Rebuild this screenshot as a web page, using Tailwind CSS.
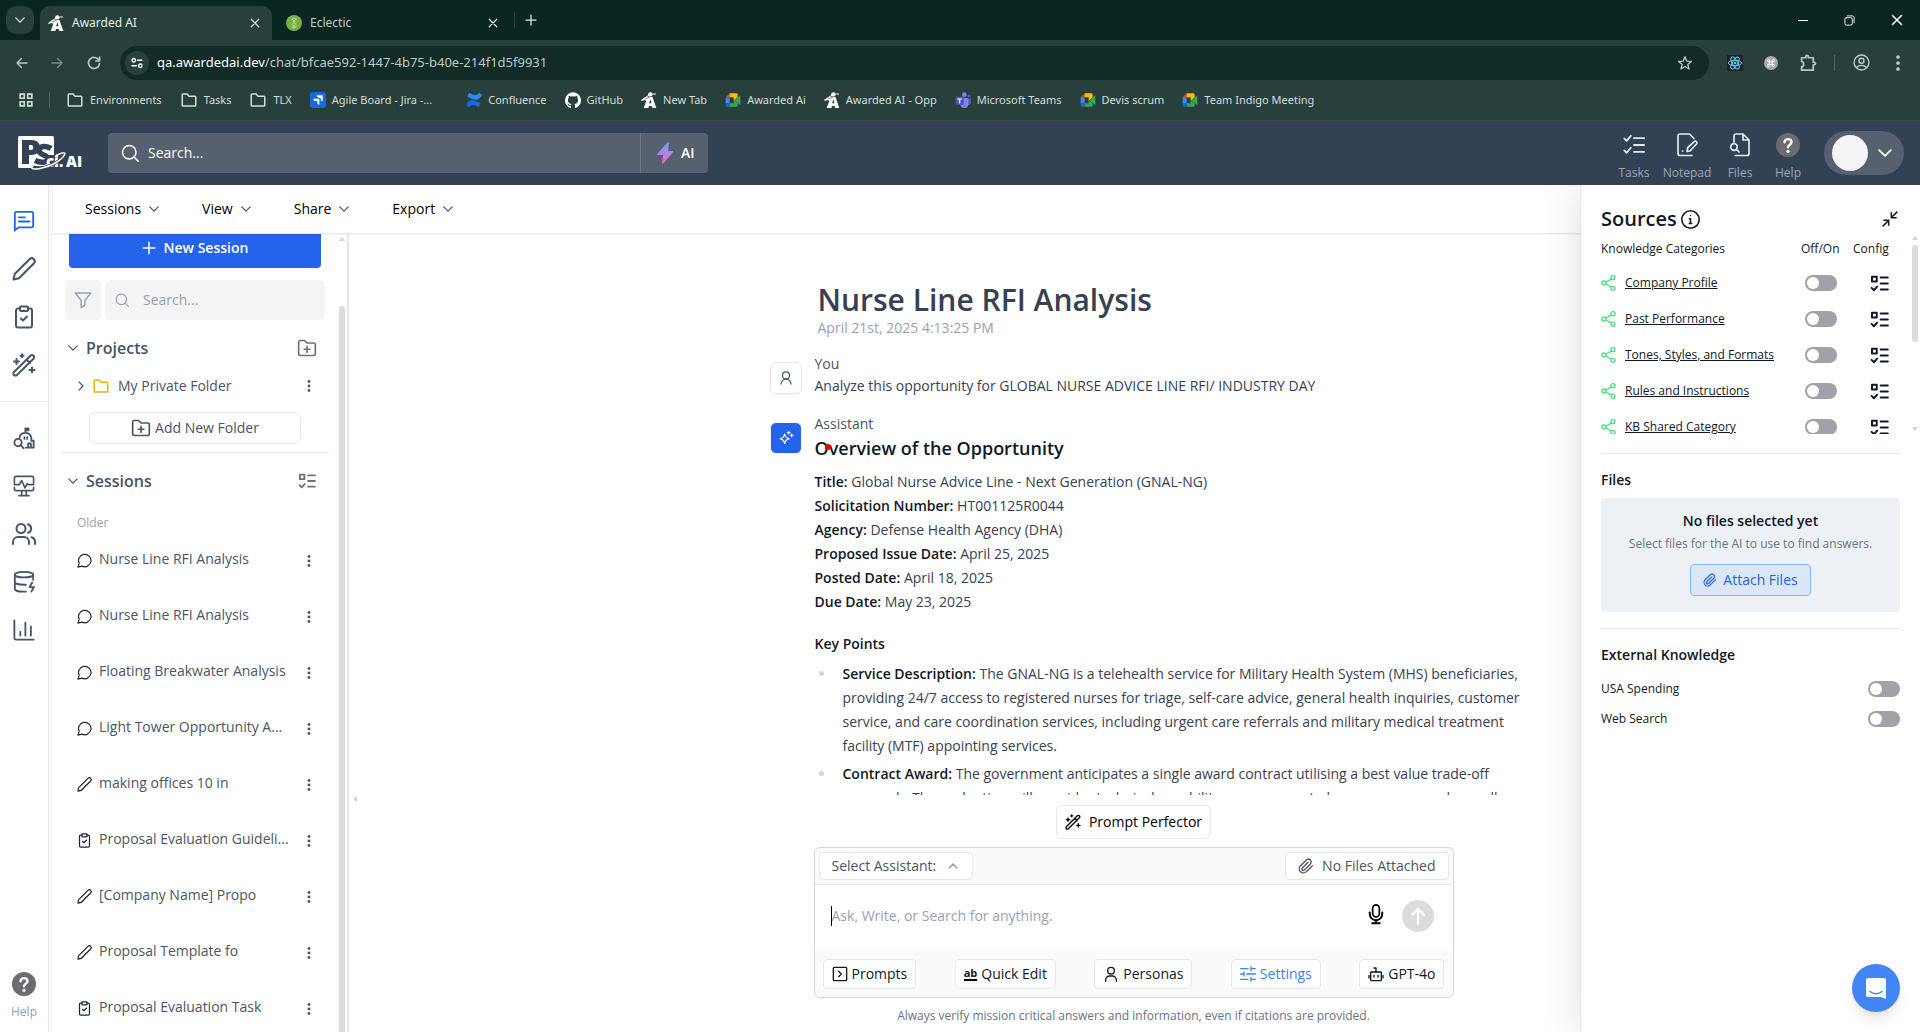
<!DOCTYPE html>
<html lang="en">
<head>
<meta charset="utf-8">
<title>Awarded AI</title>
<script src="https://cdn.jsdelivr.net/npm/@tailwindcss/browser@4"></script>
</head>
<body class="flex h-screen flex-col overflow-hidden bg-white fill-none stroke-current stroke-2 font-['Open_Sans','Noto_Sans',sans-serif] text-sm text-[#374151] [stroke-linecap:round] [stroke-linejoin:round]">

<svg class="hidden" aria-hidden="true">
  <!-- Line icons: fill and stroke are inherited from the page -->
  <symbol id="chev-down" viewBox="0 0 24 24"><path stroke-width="3" d="M2 7l10 10L22 7"/></symbol>
  <symbol id="chev-up" viewBox="0 0 24 24"><path stroke-width="3.500" d="M3 17l9-10 9 10"/></symbol>
  <symbol id="chev-right" viewBox="0 0 24 24"><path stroke-width="3" d="M7 2l10 10L7 22"/></symbol>
  <symbol id="x" viewBox="0 0 24 24"><path stroke-width="3" d="M3 3l18 18M21 3L3 21"/></symbol>
  <symbol id="plus" viewBox="0 0 24 24"><path stroke-width="2.500" d="M12 2v20M2 12h20"/></symbol>
  <symbol id="search" viewBox="0 0 24 24"><circle cx="11" cy="11" r="9"/><path d="M17.500 17.500L23 23"/></symbol>
  <symbol id="folder" viewBox="0 0 24 24"><path d="M3 19V5a1 1 0 0 1 1-1h5.500l2.500 3H20a1 1 0 0 1 1 1v11a1 1 0 0 1-1 1H4a1 1 0 0 1-1-1z"/></symbol>
  <symbol id="folder-plus" viewBox="0 0 24 24"><path d="M2 19V5a2 2 0 0 1 2-2h5l3 3h8a2 2 0 0 1 2 2v11a2 2 0 0 1-2 2H4a2 2 0 0 1-2-2zM12 10v7M8.500 13.500h7"/></symbol>
  <symbol id="pencil" viewBox="0 0 24 24"><path d="M1.500 22.500l1.200-5.500L17.500 2.200a2.900 2.900 0 0 1 4.300 4.300L7 21.300z"/></symbol>
  <symbol id="clipboard" viewBox="0 0 24 24"><path d="M8 3.500H6a2 2 0 0 0-2 2v15a2 2 0 0 0 2 2h12a2 2 0 0 0 2-2v-15a2 2 0 0 0-2-2h-2"/><rect x="8" y="1.500" width="8" height="4.500" rx="1"/><path d="M9 13.500l2 2 4-4"/></symbol>
  <symbol id="wand" viewBox="0 0 24 24"><path d="M2 19L18.500 2.700a2.200 2.200 0 0 1 3 0 2.200 2.200 0 0 1 0 3L5 22a2.100 2.100 0 0 1-3-3zM14.500 6.500l3.500 3.500M4.500 6v5M2 8.500h5M10 1.200v3M8.500 2.700h3M20 14.500v5M17.500 17h5"/></symbol>
  <symbol id="chat-lines" viewBox="0 0 24 24"><path stroke-linejoin="miter" d="M2 22V4a2 2 0 0 1 2-2h16a2 2 0 0 1 2 2v13a2 2 0 0 1-2 2H6z"/><path d="M6.500 8H13M6.500 12.500H18"/></symbol>
  <symbol id="bubble" viewBox="0 0 24 24"><path d="M7.900 21A10 10 0 1 0 3.500 16.600L1.500 22.500z"/></symbol>
  <symbol id="funnel" viewBox="0 0 24 24"><path d="M1.500 2.500h21l-8 10V19L9.500 22v-9.500z"/></symbol>
  <symbol id="todo" viewBox="0 0 24 24"><path stroke-width="2.500" d="M2.500 3.500h6v6h-6zM13.500 4.500h9M13.500 12h9M13.500 19.500h9M2 17.500l3 3 4-4.500"/></symbol>
  <symbol id="list-checks" viewBox="0 0 24 24"><path d="M1.500 5l2.500 2.500L8.500 2M1.500 18l2.500 2.500L8.500 15M12 4.500h11M12 12h11M12 19.500h11"/></symbol>
  <symbol id="building" viewBox="0 0 24 24"><path d="M13.500 1.500v4.500M13.500 1.500H17v2h-3.500M7 11.500a6.700 6.700 0 0 1 13 0V15M12.500 11v2M15.500 11v2M20 15h2.500v7.500H14M16.500 22v-4h3v4"/><circle cx="5.500" cy="17" r="4"/><path d="M8.500 20l3 3"/></symbol>
  <symbol id="monitor" viewBox="0 0 24 24"><path stroke-width="1.800" d="M1.500 9V3.500a2 2 0 0 1 2-2h17a2 2 0 0 1 2 2V9M1.500 13.500v1.500a2 2 0 0 0 2 2h17a2 2 0 0 0 2-2v-1.500M1.500 10.500H7L9.500 6l3.500 8 2.500-4.500 1 1h6M9.500 17v5M14.500 17v5M6.500 22.500h11"/></symbol>
  <symbol id="users" viewBox="0 0 24 24"><circle cx="9" cy="6.500" r="4.500"/><path d="M1 22v-2a5 5 0 0 1 5-5h6a5 5 0 0 1 5 5v2M16 2.200a4.500 4.500 0 0 1 0 8.600M23 22v-2a5 5 0 0 0-3.500-4.800"/></symbol>
  <symbol id="database" viewBox="0 0 24 24"><ellipse cx="12" cy="4" rx="10" ry="3"/><path d="M2 4v15.500c0 1.700 4 3 9 3h3M22 4v5.500M2 12c0 1.700 4.500 3 10 3h2M21 12.500l-3 5h5l-3 5"/></symbol>
  <symbol id="chart" viewBox="0 0 24 24"><path d="M1.500 1.500v19a2 2 0 0 0 2 2h19M8 14v4M13.500 4v14M19.500 8v10"/></symbol>
  <symbol id="notepad" viewBox="0 0 24 24"><path stroke-width="1.700" d="M17 22.500H5a2 2 0 0 1-2-2V3a2 2 0 0 1 2-2h9.500L19 5.500M7.500 18h.2M12 18.500l.8-4L19 8.800a1.600 1.600 0 0 1 2.500 2.200L15 18z"/></symbol>
  <symbol id="file-search" viewBox="0 0 24 24"><path stroke-width="1.700" d="M6 9V3a2 2 0 0 1 2-2h7l6 6v13.500a2 2 0 0 1-2 2H7M15 1v6h6"/><circle stroke-width="1.700" cx="6" cy="14" r="3.300"/><path stroke-width="1.700" d="M8.500 16.500l2.500 2.500"/></symbol>
  <symbol id="person" viewBox="0 0 24 24"><circle cx="12" cy="7.500" r="6"/><path d="M3.500 22.500a8.500 8.500 0 0 1 17 0"/></symbol>
  <symbol id="persona" viewBox="0 0 24 24"><circle cx="12" cy="7" r="5"/><path d="M4 23v-2a6 6 0 0 1 6-6h4a6 6 0 0 1 6 6v2"/></symbol>
  <symbol id="sparkle" viewBox="0 0 24 24"><path stroke-width="1.700" d="M10 6c.8 4.800 2.200 6.200 7 7-4.800 1-6.200 2.500-7 7.500-.8-5-2.200-6.500-7-7.500 4.800-.8 6.200-2.200 7-7zM16 2v4M14 4h4M20.500 6v4M18.500 8h4"/></symbol>
  <symbol id="clip" viewBox="0 0 24 24"><path d="M21.500 11.500l-9 9a6 6 0 0 1-9-8.500l9-9a4.200 4.200 0 0 1 6 6l-9 9a2 2 0 0 1-3-3l8.500-8.500"/></symbol>
  <symbol id="mic" viewBox="0 0 24 24"><rect x="8" y="1" width="8" height="14.500" rx="4"/><path stroke-width="2.300" d="M4.500 10v2a7.500 7.500 0 0 0 15 0v-2M12 19.500V23M7.500 23h9"/></symbol>
  <symbol id="arrow-up" viewBox="0 0 24 24"><path stroke-width="2.800" d="M12 21V4M5 10.500L12 3.500l7 7"/></symbol>
  <symbol id="prompt" viewBox="0 0 24 24"><rect x="2" y="2" width="20" height="20" rx="1.500"/><path d="M10 8l4 4-4 4"/></symbol>
  <symbol id="sliders" viewBox="0 0 24 24"><path d="M1 4h11M17 4h6M16.500 1v6M1 12h4M10 12h13M6 9v6M1 20h11M17 20h6M16.500 17v6"/></symbol>
  <symbol id="bot" viewBox="0 0 24 24"><rect x="4" y="9" width="16" height="13" rx="1"/><path d="M12 9V3H9M1.500 14v4M22.500 14v4M9 14v2.500M15 14v2.500"/></symbol>
  <symbol id="share" viewBox="0 0 24 24"><circle cx="4.500" cy="12" r="3"/><circle cx="18" cy="4" r="3"/><circle cx="18" cy="20" r="3"/><path d="M7.500 10.500L15.500 6M7.500 13.500l8 4.500"/></symbol>
  <symbol id="info" viewBox="0 0 24 24"><circle cx="12" cy="12" r="11"/><path d="M12 11v6M12 7h.01M10.500 11H12M10.500 17h3"/></symbol>
  <symbol id="shrink" viewBox="0 0 24 24"><path stroke-width="2.300" stroke-linecap="butt" stroke-linejoin="miter" d="M23 1l-8 8M14 2v8h8M1 23l8-8M2 14h8v8"/></symbol>
  <symbol id="star" viewBox="0 0 24 24"><path d="M12 2.500l2.600 6.600 7 .5-5.400 4.500 1.800 6.900-6-3.800L6 21l1.800-6.900-5.400-4.500 7-.5z"/></symbol>
  <symbol id="puzzle" viewBox="0 0 24 24"><path stroke-width="2.300" d="M3.500 5H9V3.500a1.700 1.700 0 0 1 3.400 0V5H19v6h1.200a1.700 1.700 0 0 1 0 3.400H19V21.500H3.500V17c3.500 0 3.500-7 0-7z"/></symbol>
  <symbol id="account" viewBox="0 0 24 24"><circle cx="12" cy="12" r="10.500"/><circle cx="12" cy="9.500" r="3.500"/><path d="M5 19c3-4 11-4 14 0"/></symbol>
  <symbol id="back" viewBox="0 0 24 24"><path stroke-width="2.800" d="M22 12H2M11 3l-9 9 9 9"/></symbol>
  <symbol id="forward" viewBox="0 0 24 24"><path stroke-width="2.800" d="M2 12h20M13 3l9 9-9 9"/></symbol>
  <symbol id="reload" viewBox="0 0 24 24"><path stroke-width="2.800" d="M20.500 7.500A9.500 9.500 0 1 0 21.500 13M21.500 2v6.500H15"/></symbol>
  <symbol id="tune" viewBox="0 0 24 24"><circle stroke-width="2.600" cx="5.500" cy="6.500" r="3.500"/><path stroke-width="2.600" d="M13 6.500h9M2 17.500h9"/><circle stroke-width="2.600" cx="18.500" cy="17.500" r="3.500"/></symbol>
  <symbol id="apps" viewBox="0 0 24 24"><path stroke-width="2.800" stroke-linejoin="miter" d="M2 2h7v7H2zM15 2h7v7h-7zM2 15h7v7H2zM15 15h7v7h-7z"/></symbol>
  <symbol id="restore" viewBox="0 0 24 24"><rect x="2" y="6" width="16" height="16" rx="3"/><path d="M7 2h11a4 4 0 0 1 4 4v11"/></symbol>
  <!-- Solid and coloured icons -->
  <symbol id="react" viewBox="0 0 24 24" stroke="none"><rect width="24" height="24" fill="#20232a"/><g stroke="#5ccfee" stroke-width="1.500"><ellipse cx="12" cy="12" rx="10" ry="4"/><ellipse cx="12" cy="12" rx="10" ry="4" transform="rotate(60 12 12)"/><ellipse cx="12" cy="12" rx="10" ry="4" transform="rotate(120 12 12)"/></g><circle cx="12" cy="12" r="2" fill="#5ccfee"/></symbol>
  <symbol id="cmd" viewBox="0 0 24 24" stroke="none"><circle cx="12" cy="12" r="10.500" fill="#a8a8a8"/><path stroke="#fff" stroke-width="1.500" d="M10 10h4v4h-4zM10 10H8.500A1.700 1.700 0 1 1 10 8.300zM14 10V8.300A1.700 1.700 0 1 1 15.500 10zM14 14h1.500a1.700 1.700 0 1 1-1.500 1.700zM10 14v1.700A1.700 1.700 0 1 1 8.500 14z"/></symbol>
  <symbol id="dots" viewBox="0 0 24 24" stroke="none"><g fill="currentColor"><circle cx="12" cy="3" r="2.800"/><circle cx="12" cy="12" r="2.800"/><circle cx="12" cy="21" r="2.800"/></g></symbol>
  <symbol id="help" viewBox="0 0 24 24" stroke="none"><circle cx="12" cy="12" r="12" fill="#6b6b70"/><path d="M8.500 9.300c0-4.300 7-4.300 7 0 0 2.500-3.500 2.500-3.500 5" stroke="#fff" stroke-width="2.400"/><circle cx="12" cy="18.300" r="1.600" fill="#fff"/></symbol>
  <symbol id="award" viewBox="0 0 24 24" stroke="none"><path fill="#fff" fill-rule="evenodd" d="M10 7h7l6 17h-6l-1-3h-4l-1 3H4l4-11-3-1-5 2 6-6zM14 11l-1.800 6h3.600z"/><circle cx="14" cy="3.800" r="3.300" fill="#fff"/><path d="M1 12C7 9 12 2 22 3" stroke="#fff" stroke-width="1.500"/><path d="M7 10c5-1 8-4 11-4" stroke="#28403b" stroke-width="1"/></symbol>
  <symbol id="meet" viewBox="0 0 24 24" stroke="none"><path fill="#ea4335" d="M1 8l6-6v6z"/><path fill="#4285f4" d="M1 8h6v9H1z"/><path fill="#1967d2" d="M1 17h6v5H3a2 2 0 0 1-2-2z"/><path fill="#34a853" d="M7 17h6v-5l6 5v3a2 2 0 0 1-2 2H7z"/><path fill="#fbbc04" d="M7 2h10a2 2 0 0 1 2 2v4l-6 5V8H7z"/><path fill="#34a853" d="M14 12.500L23 5v15z"/></symbol>
  <symbol id="teams" viewBox="0 0 24 24" stroke="none"><circle cx="14" cy="4" r="3.500" fill="#7b83eb"/><circle cx="21" cy="6" r="2.300" fill="#5059c9"/><path fill="#5059c9" d="M17 10h7v6a4 4 0 0 1-6 3z"/><path fill="#7b83eb" d="M8 9h12v9a6 6 0 0 1-12 0z"/><rect x="1" y="7" width="12" height="12" rx="1" fill="#4b53bc"/><path stroke="#fff" stroke-width="1.800" d="M4 10.500h6M7 10.500v6"/></symbol>
  <symbol id="jira" viewBox="0 0 24 24" stroke="none"><rect width="24" height="24" rx="4" fill="#1868db"/><path fill="#fff" d="M10 5h9v9c-2 0-3-1.500-3-3.500V8.500h-2.500C11.500 8.500 10 7 10 5zM5 10h9v9c-2 0-3-1.500-3-3.500v-2H8.500C6.500 13.500 5 12 5 10z"/></symbol>
  <symbol id="confluence" viewBox="0 0 24 24" stroke="none"><path fill="#1868db" d="M1 18c5-8 9-7 21-1l-2.500 6C11 19 8 18 4.500 23L0 20z"/><path fill="#2f87ff" d="M23 6c-5 8-9 7-21 1l2.500-6C13 5 16 6 19.500 1L24 4z"/></symbol>
  <symbol id="github" viewBox="0 0 24 24" stroke="none"><path fill="#fff" d="M12 .5A12 12 0 0 0 8.200 23.900c.6.100.8-.3.800-.6v-2.200c-3.300.7-4-1.400-4-1.400-.6-1.400-1.400-1.800-1.400-1.800-1-.7.100-.7.100-.7 1.200.1 1.900 1.200 1.900 1.200 1 1.800 2.800 1.300 3.500 1 .1-.8.400-1.300.7-1.600-2.600-.3-5.400-1.300-5.400-5.900 0-1.300.5-2.400 1.200-3.200-.1-.3-.5-1.500.1-3.200 0 0 1-.3 3.300 1.200a11.500 11.500 0 0 1 6 0c2.300-1.500 3.300-1.200 3.300-1.200.6 1.700.2 2.900.1 3.200.8.800 1.200 1.900 1.200 3.200 0 4.600-2.800 5.600-5.500 5.900.5.400.9 1.100.9 2.200v3.300c0 .3.200.7.800.6A12 12 0 0 0 12 .5z"/></symbol>
  <symbol id="eclectic" viewBox="0 0 24 24" stroke="none"><circle cx="12" cy="12" r="12" fill="#78b041"/><path stroke="#cbe3ad" stroke-width="1.300" d="M9 6l4 4-4 4 4 4M15 6l-4 4 4 4-4 4M9 6c3-2 3-2 6 0M9 18c3 2 3 2 6 0"/></symbol>
</svg>

<!-- Browser tab strip -->
<div class="flex h-10 shrink-0 items-end bg-[#0a2622] font-['Noto_Sans','Open_Sans',sans-serif] text-xs text-[#dfe9e6]">
  <button aria-label="Search tabs" class="mb-1.5 ml-1.5 flex size-7 items-center justify-center rounded-[10px] bg-[#28403b]"><svg class="size-2.5"><use href="#chev-down"/></svg></button>
  <div class="ml-1.5 flex h-[34px] w-[232px] items-center rounded-t-[10px] bg-[#28403b] px-2">
    <svg class="size-4"><use href="#award"/></svg><span class="ml-2 flex-1 text-[#e6efec]">Awarded AI</span>
    <button aria-label="Close tab" class="mr-1"><svg class="size-2.5"><use href="#x"/></svg></button>
  </div>
  <div class="flex h-[34px] w-[242px] items-center pr-2 pl-3.5">
    <svg class="size-4"><use href="#eclectic"/></svg><span class="ml-2 flex-1 text-[#b9cdc8]">Eclectic</span>
    <button aria-label="Close tab" class="mr-2"><svg class="size-2.5"><use href="#x"/></svg></button>
  </div>
  <div class="mb-3 h-4 w-px bg-[#28403b]"></div>
  <button aria-label="New tab" class="mb-3.5 ml-2.5"><svg class="size-3"><use href="#plus"/></svg></button>
  <div class="flex flex-1 items-center justify-end gap-9 self-center pr-[17px] text-white">
    <button aria-label="Minimize" class="h-px w-2.5 bg-white"></button>
    <button aria-label="Restore"><svg class="size-[11px]"><use href="#restore"/></svg></button>
    <button aria-label="Close"><svg class="size-3"><use href="#x"/></svg></button>
  </div>
</div>

<!-- Address bar -->
<div class="flex h-[45px] shrink-0 items-center bg-[#28403b] pr-3.5 pl-4 text-[#b5ccc6]">
  <button aria-label="Back"><svg class="size-3"><use href="#back"/></svg></button>
  <button aria-label="Forward" class="ml-[23px] text-[#6f8f87]"><svg class="size-3"><use href="#forward"/></svg></button>
  <button aria-label="Reload" class="ml-6"><svg class="size-3.5"><use href="#reload"/></svg></button>
  <div class="ml-[19px] flex h-[34px] flex-1 items-center rounded-full bg-[#112b27] pr-4 pl-[5px] font-['Noto_Sans','Open_Sans',sans-serif]">
    <span class="flex size-6 items-center justify-center rounded-full bg-[#28403b] text-white"><svg class="size-3"><use href="#tune"/></svg></span>
    <span class="ml-2 flex-1 text-[13px] text-[#b9cac6]"><span class="text-white">qa.awardedai.dev</span>/chat/bfcae592-1447-4b75-b40e-214f1d5f9931</span>
    <button aria-label="Bookmark"><svg class="size-4"><use href="#star"/></svg></button>
  </div>
  <svg class="ml-[18px] size-4"><use href="#react"/></svg>
  <svg class="ml-5 size-4"><use href="#cmd"/></svg>
  <button aria-label="Extensions" class="ml-5"><svg class="size-[18px]"><use href="#puzzle"/></svg></button>
  <div class="ml-[17px] h-4 w-px bg-[#4a625c]"></div>
  <button aria-label="Profile" class="ml-[18px]"><svg class="size-[17px]"><use href="#account"/></svg></button>
  <button aria-label="Menu" class="ml-5"><svg class="size-4"><use href="#dots"/></svg></button>
</div>

<!-- Bookmarks -->
<nav class="flex h-9 shrink-0 items-center gap-[18px] border-b border-[#45484a] bg-[#28403b] pb-1.5 pl-[19px] font-['Noto_Sans','Open_Sans',sans-serif] text-[11px] text-[#d3dedb]">
  <svg class="size-3.5"><use href="#apps"/></svg>
  <div class="-mx-0.5 h-4 w-px bg-[#4a625c]"></div>
  <a href="#" class="flex items-center gap-1.5"><svg class="size-[18px]"><use href="#folder"/></svg>Environments</a>
  <a href="#" class="flex items-center gap-1.5"><svg class="size-[18px]"><use href="#folder"/></svg>Tasks</a>
  <a href="#" class="flex items-center gap-1.5"><svg class="size-[18px]"><use href="#folder"/></svg>TLX</a>
  <a href="#" class="flex items-center gap-1.5"><svg class="size-4"><use href="#jira"/></svg>Agile Board - Jira -...</a>
  <a href="#" class="ml-4 flex items-center gap-1.5"><svg class="size-4"><use href="#confluence"/></svg>Confluence</a>
  <a href="#" class="flex items-center gap-1.5"><svg class="size-4"><use href="#github"/></svg>GitHub</a>
  <a href="#" class="flex items-center gap-1.5"><svg class="size-4"><use href="#award"/></svg>New Tab</a>
  <a href="#" class="flex items-center gap-1.5"><svg class="size-4"><use href="#meet"/></svg>Awarded Ai</a>
  <a href="#" class="flex items-center gap-1.5"><svg class="size-4"><use href="#award"/></svg>Awarded AI - Opp</a>
  <a href="#" class="flex items-center gap-1.5"><svg class="size-4"><use href="#teams"/></svg>Microsoft Teams</a>
  <a href="#" class="flex items-center gap-1.5"><svg class="size-4"><use href="#meet"/></svg>Devis scrum</a>
  <a href="#" class="flex items-center gap-1.5"><svg class="size-4"><use href="#meet"/></svg>Team Indigo Meeting</a>
</nav>

<!-- Application header -->
<header class="flex h-16 shrink-0 items-center bg-[#334155] pr-4 pl-[18px] text-white">
  <svg class="h-[34px] w-[66px] stroke-none" viewBox="0 0 66 34" role="img" aria-label="PSci.AI">
    <rect width="36" height="32" rx="1.500" fill="#fff"/>
    <path fill="#334155" fill-rule="evenodd" d="M4 4h9c9 0 10 6 8 11-2 3-5 4-8 4h-2v9H4zm7 5v5h2c3 0 3-5 0-5z"/>
    <path stroke="#334155" stroke-width="5.500" stroke-linecap="butt" d="M33 12.500c-4-3-12-3-12 2 0 5 9 4 9 8.500 0 4-8 4-13 1.500"/>
    <path fill="#334155" d="M30 19h7v13H24c4 0 6-4 6-7z"/>
    <text x="28" y="31" fill="#fff" font-size="15" font-weight="800">ci.</text>
    <text x="48" y="31" fill="#fff" font-size="15" font-weight="800">AI</text>
    <path stroke="#334155" stroke-width="3" d="M15 31c10 3 26-3 32-13"/>
    <path stroke="#fff" stroke-width="1.500" d="M15 30c-4 3 3 4 9 2 10-2 20-8 23-14 0-2-4-1-8 1"/>
  </svg>
  <div class="ml-6 flex h-10 w-[600px] items-center rounded bg-[#57606e]">
    <label for="q" class="ml-[13px]"><svg class="size-[18px]" aria-label="Search"><use href="#search"/></svg></label>
    <input id="q" type="text" placeholder="Search..." class="ml-[9px] flex-1 bg-transparent text-sm outline-none placeholder:text-white">
    <button class="flex h-10 w-[68px] items-center gap-2 border-l border-[#6e7683] pl-4 font-semibold"><svg class="h-6 w-4 stroke-none" viewBox="0 0 16 24"><defs><linearGradient id="bolt" x1="0" y1="0" x2="0" y2="1"><stop offset="0" stop-color="#5fa8f8"/><stop offset=".5" stop-color="#b084e8"/><stop offset="1" stop-color="#f062c0"/></linearGradient></defs><path fill="url(#bolt)" d="M11 1L.5 12.500v1.500H6L5 22.500l1 .5 10-12V10h-5l1-8.500z"/></svg>AI</button>
  </div>
  <nav class="ml-auto flex pt-2 text-xs text-[#9ca6b4] [&_svg]:text-[#e2e8f0]">
    <a href="#" class="flex w-[50px] flex-col items-center gap-2"><svg class="size-6 p-px"><use href="#list-checks"/></svg><span>Tasks</span></a>
    <a href="#" class="flex w-14 flex-col items-center gap-2"><svg class="size-6"><use href="#notepad"/></svg><span>Notepad</span></a>
    <a href="#" class="flex w-[50px] flex-col items-center gap-2"><svg class="size-6"><use href="#file-search"/></svg><span>Files</span></a>
    <a href="#" class="flex w-[46px] flex-col items-center gap-2"><svg class="size-6"><use href="#help"/></svg><span>Help</span></a>
  </nav>
  <button aria-label="Account" class="ml-[13px] flex h-11 w-20 items-center gap-2.5 rounded-full bg-[#57606e] pl-2"><span class="size-9 rounded-full bg-gray-100"></span><svg class="size-3.5"><use href="#chev-down"/></svg></button>
</header>

<div class="flex min-h-0 flex-1">
  <!-- Icon rail -->
  <nav class="flex w-[49px] shrink-0 flex-col items-center border-r border-gray-200 pt-6 text-[#475569]">
    <div class="flex flex-col gap-6">
      <a href="#" aria-label="Chat" class="text-[#2563eb]"><svg class="size-6 p-px"><use href="#chat-lines"/></svg></a>
      <a href="#" aria-label="Write"><svg class="size-6"><use href="#pencil"/></svg></a>
      <a href="#" aria-label="Tasks"><svg class="size-6"><use href="#clipboard"/></svg></a>
      <a href="#" aria-label="Prompts"><svg class="size-6"><use href="#wand"/></svg></a>
    </div>
    <div class="my-6 h-px w-full bg-gray-200"></div>
    <div class="flex flex-col gap-6">
      <a href="#" aria-label="Opportunities"><svg class="size-6 p-px"><use href="#building"/></svg></a>
      <a href="#" aria-label="Monitor"><svg class="size-6 p-px"><use href="#monitor"/></svg></a>
      <a href="#" aria-label="People"><svg class="size-6"><use href="#users"/></svg></a>
      <a href="#" aria-label="Data"><svg class="size-6 p-px"><use href="#database"/></svg></a>
      <a href="#" aria-label="Reports"><svg class="size-6 p-px"><use href="#chart"/></svg></a>
    </div>
    <a href="#" class="mt-auto mb-3 flex flex-col items-center gap-2 text-xs text-slate-400"><svg class="size-6"><use href="#help"/></svg>Help</a>
  </nav>
  <div class="w-1 shrink-0 bg-[#f8f8f8]"></div>

  <div class="relative flex min-w-0 flex-1 flex-col">
    <!-- Menu bar -->
    <div class="z-10 flex h-[49px] shrink-0 items-center gap-[43px] border-b border-gray-200 bg-white pl-8 text-black shadow-xs">
      <button class="flex items-center gap-2">Sessions<svg class="size-2.5 text-[#4b5563]"><use href="#chev-down"/></svg></button>
      <button class="flex items-center gap-2">View<svg class="size-2.5 text-[#4b5563]"><use href="#chev-down"/></svg></button>
      <button class="flex items-center gap-2">Share<svg class="size-2.5 text-[#4b5563]"><use href="#chev-down"/></svg></button>
      <button class="flex items-center gap-2">Export<svg class="size-2.5 text-[#4b5563]"><use href="#chev-down"/></svg></button>
    </div>

    <div class="flex min-h-0 flex-1">
      <!-- Session list -->
      <aside class="flex w-[296px] shrink-0 border-r-2 border-gray-200">
        <div class="flex min-w-0 flex-1 flex-col overflow-hidden pr-2.5 pl-2">
          <button class="mx-2 flex h-[34px] shrink-0 items-center justify-center gap-2 rounded-b bg-[#2563eb] pb-1.5 font-semibold text-white"><svg class="size-3.5"><use href="#plus"/></svg>New Session</button>
          <div class="mt-3 flex h-10 shrink-0 gap-1 px-1">
            <button aria-label="Filter" class="flex w-9 items-center justify-center rounded-sm bg-gray-100 text-gray-400"><svg class="size-[18px]"><use href="#funnel"/></svg></button>
            <label class="flex flex-1 items-center rounded-md bg-gray-100 text-gray-400"><svg class="ml-2.5 size-3.5"><use href="#search"/></svg><input type="text" aria-label="Search sessions" placeholder="Search..." class="ml-3.5 w-36 bg-transparent outline-none placeholder:text-gray-400"></label>
          </div>
          <div class="mt-4 flex items-center pr-3 pl-[7px] text-[#475569]">
            <svg class="size-2.5"><use href="#chev-down"/></svg><h2 class="ml-2 flex-1 text-base font-semibold">Projects</h2><button aria-label="New project"><svg class="size-5 text-[#6b7280]"><use href="#folder-plus"/></svg></button>
          </div>
          <div class="mt-4 flex items-center pr-3.5 pl-[15px] text-[#475569]">
            <svg class="size-2.5"><use href="#chev-right"/></svg><svg class="ml-1.5 size-[18px] text-[#eab308]"><use href="#folder"/></svg><span class="ml-2 flex-1 text-[#4b5563]">My Private Folder</span><button aria-label="Folder menu"><svg class="size-3"><use href="#dots"/></svg></button>
          </div>
          <button class="mx-7 mt-4 flex h-8 shrink-0 items-center justify-center gap-1 rounded-md border border-gray-200 text-[#4b5563]"><svg class="size-5"><use href="#folder-plus"/></svg>Add New Folder</button>
          <div class="mt-2 h-px shrink-0 bg-gray-200"></div>
          <div class="mt-4 flex items-center pr-3 pl-[7px] text-[#475569]">
            <svg class="size-2.5"><use href="#chev-down"/></svg><h2 class="ml-2 flex-1 text-base font-semibold">Sessions</h2><button aria-label="Select sessions"><svg class="mr-px size-[18px] text-[#6b7280]"><use href="#todo"/></svg></button>
          </div>
          <p class="mt-[22px] pl-4 text-xs text-gray-400">Older</p>
          <ul class="mt-0.5 text-[#4b5563]">
            <li class="flex h-14 items-center pr-3.5 pl-4"><svg class="mb-0.5 size-[15px] text-[#1e293b]"><use href="#bubble"/></svg><span class="mb-1 ml-[7px] flex-1 truncate">Nurse Line RFI Analysis</span><button aria-label="Session menu" class="ml-2"><svg class="size-3"><use href="#dots"/></svg></button></li>
            <li class="flex h-14 items-center pr-3.5 pl-4"><svg class="mb-0.5 size-[15px] text-[#1e293b]"><use href="#bubble"/></svg><span class="mb-1 ml-[7px] flex-1 truncate">Nurse Line RFI Analysis</span><button aria-label="Session menu" class="ml-2"><svg class="size-3"><use href="#dots"/></svg></button></li>
            <li class="flex h-14 items-center pr-3.5 pl-4"><svg class="mb-0.5 size-[15px] text-[#1e293b]"><use href="#bubble"/></svg><span class="mb-1 ml-[7px] flex-1 truncate">Floating Breakwater Analysis</span><button aria-label="Session menu" class="ml-2"><svg class="size-3"><use href="#dots"/></svg></button></li>
            <li class="flex h-14 items-center pr-3.5 pl-4"><svg class="mb-0.5 size-[15px] text-[#1e293b]"><use href="#bubble"/></svg><span class="mb-1 ml-[7px] flex-1 truncate">Light Tower Opportunity A...</span><button aria-label="Session menu" class="ml-2"><svg class="size-3"><use href="#dots"/></svg></button></li>
            <li class="flex h-14 items-center pr-3.5 pl-4"><svg class="mb-0.5 size-[15px] text-[#1e293b]"><use href="#pencil"/></svg><span class="mb-1 ml-[7px] flex-1 truncate">making offices 10 in</span><button aria-label="Session menu" class="ml-2"><svg class="size-3"><use href="#dots"/></svg></button></li>
            <li class="flex h-14 items-center pr-3.5 pl-4"><svg class="mb-0.5 size-[15px] text-[#1e293b]"><use href="#clipboard"/></svg><span class="mb-1 ml-[7px] flex-1 truncate">Proposal Evaluation Guideli...</span><button aria-label="Session menu" class="ml-2"><svg class="size-3"><use href="#dots"/></svg></button></li>
            <li class="flex h-14 items-center pr-3.5 pl-4"><svg class="mb-0.5 size-[15px] text-[#1e293b]"><use href="#pencil"/></svg><span class="mb-1 ml-[7px] flex-1 truncate">[Company Name] Propo</span><button aria-label="Session menu" class="ml-2"><svg class="size-3"><use href="#dots"/></svg></button></li>
            <li class="flex h-14 items-center pr-3.5 pl-4"><svg class="mb-0.5 size-[15px] text-[#1e293b]"><use href="#pencil"/></svg><span class="mb-1 ml-[7px] flex-1 truncate">Proposal Template fo</span><button aria-label="Session menu" class="ml-2"><svg class="size-3"><use href="#dots"/></svg></button></li>
            <li class="flex h-14 items-center pr-3.5 pl-4"><svg class="mb-0.5 size-[15px] text-[#1e293b]"><use href="#clipboard"/></svg><span class="mb-1 ml-[7px] flex-1 truncate">Proposal Evaluation Task</span><button aria-label="Session menu" class="ml-2"><svg class="size-3"><use href="#dots"/></svg></button></li>
          </ul>
        </div>
        <div class="mr-0.5 flex w-1.5 flex-col">
          <svg class="mt-[3px] h-1 w-1.5 stroke-none" viewBox="0 0 6 4"><path fill="#d4d4d4" d="M3 0l3 4H0z"/></svg>
          <div class="mt-[65px] flex-1 rounded-t-full bg-[#dcdcdc]"></div>
        </div>
      </aside>
      <div class="flex w-2 shrink-0 items-center justify-end pt-[332px]"><svg class="h-1.5 w-1 stroke-none" viewBox="0 0 4 6"><path fill="#d4d4d4" d="M4 0v6L0 3z"/></svg></div>

      <!-- Conversation -->
      <main class="flex min-w-0 flex-1 flex-col items-center pr-2.5">
        <div class="min-h-0 w-full max-w-[800px] flex-1 overflow-hidden pl-9">
          <div class="pt-12 pl-12">
            <h1 class="text-3xl font-semibold text-[#374151]">Nurse Line RFI Analysis</h1>
            <p class="text-sm leading-5 text-gray-400">April 21st, 2025 4:13:25 PM</p>
          </div>
          <section class="mt-4 flex gap-[13px]">
            <div class="mt-2 flex size-8 shrink-0 items-center justify-center rounded-md border border-gray-200 shadow-xs"><svg class="size-3.5 text-[#475569]"><use href="#person"/></svg></div>
            <div><p class="leading-5 font-medium text-[#4b5563]">You</p><p class="leading-6">Analyze this opportunity for GLOBAL NURSE ADVICE LINE RFI/ INDUSTRY DAY</p></div>
          </section>
          <section class="mt-4 flex gap-[13px]">
            <div class="mt-2 flex size-8 shrink-0 items-center justify-center rounded-md border border-gray-100 bg-[#2563eb] text-white"><svg class="size-4"><use href="#sparkle"/></svg></div>
            <div>
              <p class="leading-5 font-medium text-[#4b5563]">Assistant</p>
              <h2 class="relative text-lg leading-7 font-semibold text-[#111827]">Overview of the Opportunity<span class="absolute top-2.5 left-2.5 size-1.5 rounded-full bg-red-600"></span></h2>
              <dl class="mt-2 leading-6 [&_dd]:inline [&_dt]:inline [&_dt]:font-semibold [&_dt]:text-[#111827]">
                <div><dt>Title:</dt> <dd>Global Nurse Advice Line - Next Generation (GNAL-NG)</dd></div>
                <div><dt>Solicitation Number:</dt> <dd>HT001125R0044</dd></div>
                <div><dt>Agency:</dt> <dd>Defense Health Agency (DHA)</dd></div>
                <div><dt>Proposed Issue Date:</dt> <dd>April 25, 2025</dd></div>
                <div><dt>Posted Date:</dt> <dd>April 18, 2025</dd></div>
                <div><dt>Due Date:</dt> <dd>May 23, 2025</dd></div>
              </dl>
              <h3 class="mt-[18px] leading-6 font-semibold text-[#111827]">Key Points</h3>
              <ul class="mt-1.5 space-y-1 pl-7 leading-6 [&_b]:font-semibold [&_b]:text-[#111827]">
                <li class="before:float-left before:mt-[9px] before:-ml-6 before:size-[5px] before:rounded-full before:bg-gray-300"><b>Service Description:</b> The GNAL-NG is a telehealth service for Military Health System (MHS) beneficiaries, providing 24/7 access to registered nurses for triage, self-care advice, general health inquiries, customer service, and care coordination services, including urgent care referrals and military medical treatment facility (MTF) appointing services.</li>
                <li class="before:float-left before:mt-[9px] before:-ml-6 before:size-[5px] before:rounded-full before:bg-gray-300"><b>Contract Award:</b> The government anticipates a single award contract utilising a best value trade-off approach. The evaluation will consider technical capability, management plan, resources, and overall</li>
              </ul>
            </div>
          </section>
        </div>

        <button class="mt-2.5 flex h-[34px] shrink-0 items-center gap-2 rounded-md border border-gray-200 px-2 font-medium text-black"><svg class="size-4"><use href="#wand"/></svg>Prompt Perfector</button>

        <form class="mt-2 w-full max-w-[640px] overflow-hidden rounded-md border border-gray-300 bg-gray-50" onsubmit="return false">
          <div class="flex h-[37px] items-center justify-between border-b border-gray-200 px-1">
            <button type="button" class="flex h-7 items-center gap-3 rounded border border-gray-200 bg-white px-3 text-[#4b5563]">Select Assistant:<svg class="mr-0.5 size-2.5 text-gray-400"><use href="#chev-up"/></svg></button>
            <button type="button" class="flex h-7 items-center gap-2 rounded border border-gray-200 bg-white px-3 text-[#4b5563]"><svg class="size-4"><use href="#clip"/></svg>No Files Attached</button>
          </div>
          <div class="flex h-[66px] items-center bg-white pr-[19px] pb-1 pl-4">
            <input type="text" aria-label="Message" placeholder="Ask, Write, or Search for anything." class="h-5 flex-1 border-l border-black outline-none placeholder:text-gray-400">
            <button type="button" aria-label="Dictate" class="mr-4 mb-1 text-black"><svg class="h-6 w-5"><use href="#mic"/></svg></button>
            <button aria-label="Send" class="flex size-8 items-center justify-center rounded-full bg-[#dcdcdc] text-white"><svg class="size-5"><use href="#arrow-up"/></svg></button>
          </div>
          <div class="flex items-center justify-between p-2 text-[#111827] [&_button]:flex [&_button]:h-[30px] [&_button]:items-center [&_button]:gap-1 [&_button]:rounded [&_button]:border [&_button]:border-gray-200 [&_button]:bg-white [&_button]:px-2 [&_button]:font-medium">
            <button type="button"><svg class="size-4"><use href="#prompt"/></svg>Prompts</button>
            <button type="button"><span class="border-b-2 border-black text-[11px] leading-3 font-bold">ab</span>Quick Edit</button>
            <button type="button"><svg class="size-4"><use href="#persona"/></svg>Personas</button>
            <button type="button" class="text-[#3b82f6]"><svg class="size-4"><use href="#sliders"/></svg>Settings</button>
            <button type="button"><svg class="size-4"><use href="#bot"/></svg>GPT-4o</button>
          </div>
        </form>
        <p class="mt-2.5 mb-2 text-xs text-gray-500">Always verify mission critical answers and information, even if citations are provided.</p>
      </main>
    </div>

    <!-- Sources panel -->
    <aside class="absolute inset-y-0 right-0 z-20 w-[340px] border-l border-gray-200 bg-white px-5 text-[#111827] shadow-[0_0_40px_rgba(0,0,0,0.13)] [clip-path:inset(0_0_0_-48px)]">
      <div class="flex items-center pt-[18px]">
        <h2 class="text-xl leading-8 font-semibold">Sources</h2><svg class="ml-1 size-[19px]"><use href="#info"/></svg>
        <button aria-label="Collapse" class="mr-0.5 ml-auto"><svg class="size-4"><use href="#shrink"/></svg></button>
      </div>
      <div class="h-[199px] overflow-hidden">
        <table class="w-full text-xs">
          <thead class="text-left [&_th]:font-normal"><tr class="h-[30px] align-top leading-7"><th>Knowledge Categories</th><th class="w-[52px]">Off/On</th><th class="w-[47px]">Config</th></tr></thead>
          <tbody class="[&_a]:underline [&_a]:underline-offset-1 [&_tr]:h-9">
            <tr><td><div class="flex items-center gap-2"><svg class="size-4 text-[#4ade80]"><use href="#share"/></svg><a href="#">Company Profile</a></div></td><td><input type="checkbox" aria-label="Company Profile" class="ml-1 block h-4 w-8 appearance-none rounded-full bg-[#a1a1aa] before:mt-0.5 before:ml-0.5 before:block before:size-3 before:rounded-full before:bg-white"></td><td><button aria-label="Configure" class="ml-[17px] block"><svg class="size-[19px]"><use href="#todo"/></svg></button></td></tr>
            <tr><td><div class="flex items-center gap-2"><svg class="size-4 text-[#4ade80]"><use href="#share"/></svg><a href="#">Past Performance</a></div></td><td><input type="checkbox" aria-label="Past Performance" class="ml-1 block h-4 w-8 appearance-none rounded-full bg-[#a1a1aa] before:mt-0.5 before:ml-0.5 before:block before:size-3 before:rounded-full before:bg-white"></td><td><button aria-label="Configure" class="ml-[17px] block"><svg class="size-[19px]"><use href="#todo"/></svg></button></td></tr>
            <tr><td><div class="flex items-center gap-2"><svg class="size-4 text-[#4ade80]"><use href="#share"/></svg><a href="#">Tones, Styles, and Formats</a></div></td><td><input type="checkbox" aria-label="Tones, Styles, and Formats" class="ml-1 block h-4 w-8 appearance-none rounded-full bg-[#a1a1aa] before:mt-0.5 before:ml-0.5 before:block before:size-3 before:rounded-full before:bg-white"></td><td><button aria-label="Configure" class="ml-[17px] block"><svg class="size-[19px]"><use href="#todo"/></svg></button></td></tr>
            <tr><td><div class="flex items-center gap-2"><svg class="size-4 text-[#4ade80]"><use href="#share"/></svg><a href="#">Rules and Instructions</a></div></td><td><input type="checkbox" aria-label="Rules and Instructions" class="ml-1 block h-4 w-8 appearance-none rounded-full bg-[#a1a1aa] before:mt-0.5 before:ml-0.5 before:block before:size-3 before:rounded-full before:bg-white"></td><td><button aria-label="Configure" class="ml-[17px] block"><svg class="size-[19px]"><use href="#todo"/></svg></button></td></tr>
            <tr><td><div class="flex items-center gap-2"><svg class="size-4 text-[#4ade80]"><use href="#share"/></svg><a href="#">KB Shared Category</a></div></td><td><input type="checkbox" aria-label="KB Shared Category" class="ml-1 block h-4 w-8 appearance-none rounded-full bg-[#a1a1aa] before:mt-0.5 before:ml-0.5 before:block before:size-3 before:rounded-full before:bg-white"></td><td><button aria-label="Configure" class="ml-[17px] block"><svg class="size-[19px]"><use href="#todo"/></svg></button></td></tr>
          </tbody>
        </table>
      </div>
      <div class="absolute top-[51px] right-0.5 flex h-[195px] w-1.5 flex-col stroke-none">
        <svg class="h-1 w-1.5" viewBox="0 0 6 4"><path fill="#d4d4d4" d="M3 0l3 4H0z"/></svg>
        <div class="mt-[5px] h-[97px] rounded-full bg-[#dcdcdc]"></div>
        <svg class="mt-auto h-1 w-1.5" viewBox="0 0 6 4"><path fill="#d4d4d4" d="M0 0h6L3 4z"/></svg>
      </div>
      <section class="mt-[19px] border-t border-gray-200 pt-4">
        <h3 class="leading-5 font-semibold">Files</h3>
        <div class="mt-2 flex flex-col items-center rounded bg-[#edf1f6] pt-3 pb-4">
          <p class="leading-[22px] font-semibold">No files selected yet</p>
          <p class="mt-0.5 text-xs leading-5 text-gray-500">Select files for the AI to use to find answers.</p>
          <button class="mt-2.5 flex h-8 items-center gap-1.5 rounded border border-[#8db3f5] bg-[#dbe7f6] px-3 font-medium text-[#2563eb]"><svg class="size-3.5"><use href="#clip"/></svg>Attach Files</button>
        </div>
      </section>
      <section class="mt-4 border-t border-gray-200 pt-4">
        <h3 class="leading-5 font-semibold">External Knowledge</h3>
        <label class="mt-[9px] flex h-[30px] items-center justify-between text-xs">USA Spending<input type="checkbox" class="block h-4 w-8 appearance-none rounded-full bg-[#a1a1aa] before:mt-0.5 before:ml-0.5 before:block before:size-3 before:rounded-full before:bg-white"></label>
        <label class="flex h-[30px] items-center justify-between text-xs">Web Search<input type="checkbox" class="block h-4 w-8 appearance-none rounded-full bg-[#a1a1aa] before:mt-0.5 before:ml-0.5 before:block before:size-3 before:rounded-full before:bg-white"></label>
      </section>
      <button aria-label="Open messenger" class="absolute right-5 bottom-5 flex size-12 items-center justify-center rounded-full bg-[#4285f4] shadow-lg"><svg class="size-6 stroke-none" viewBox="0 0 24 24"><path fill="#fff" d="M4 2h16a2 2 0 0 1 2 2v19l-5-2H4a2 2 0 0 1-2-2V4a2 2 0 0 1 2-2z"/><path d="M6 15.500c3.500 3 8.500 3 12 0" stroke="#4285f4" stroke-width="1.500"/></svg></button>
    </aside>
  </div>
</div>
</body>
</html>
